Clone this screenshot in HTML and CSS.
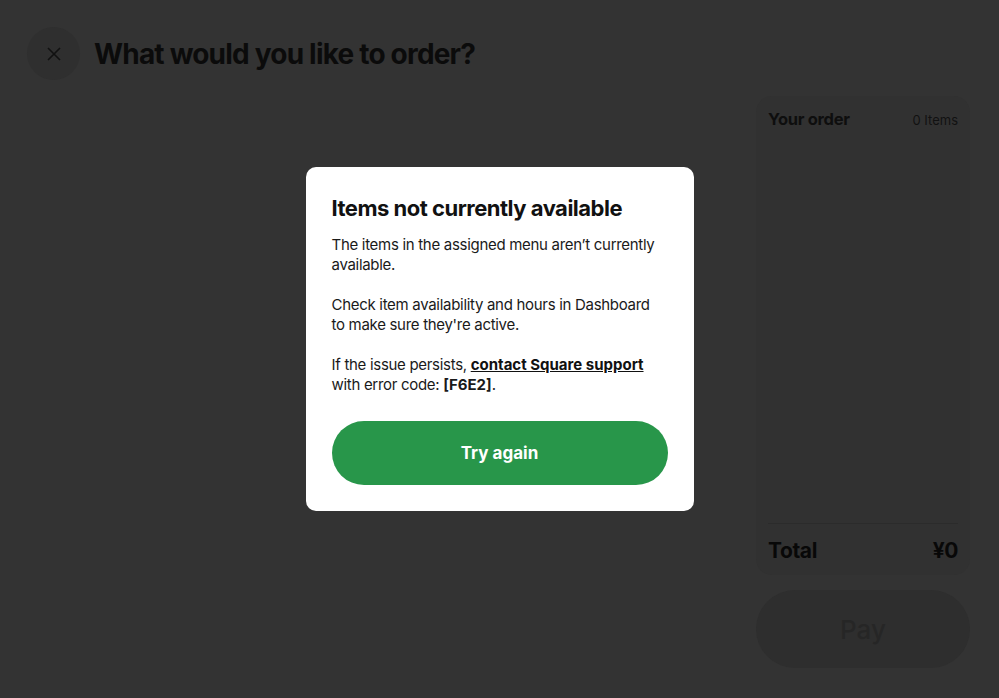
FILE: index.html
```html
<!DOCTYPE html>
<html lang="en">
<head>
<meta charset="utf-8">
<title>Order</title>
<link rel="stylesheet" href="styles.css">
</head>
<body>
<div class="page">
  <div class="main">
    <header class="header">
      <button class="close" aria-label="Close">
        <svg width="14" height="14" viewBox="0 0 14 14"><path d="M1 1L13 13M13 1L1 13" stroke="#111" stroke-width="1.6" fill="none"/></svg>
      </button>
      <h1 class="title">What would you like to order?</h1>
    </header>
  </div>
  <aside class="side">
    <div class="order">
      <div class="order-head">
        <span class="order-title">Your order</span>
        <span class="order-count">0 Items</span>
      </div>
      <div class="order-body"></div>
      <div class="order-total">
        <span>Total</span>
        <span>¥0</span>
      </div>
    </div>
    <button class="pay">Pay</button>
  </aside>
</div>
<div class="overlay">
  <div class="modal">
    <h2 class="modal-title">Items not currently available</h2>
    <p class="modal-text">The items in the assigned menu aren’t currently available.</p>
    <p class="modal-text">Check item availability and hours in Dashboard to make sure they're active.</p>
    <p class="modal-text">If the issue persists, <a class="link" href="#">contact Square support</a> with error code: <b>[F6E2]</b>.</p>
    <button class="retry">Try again</button>
  </div>
</div>
</body>
</html>
```
FILE: styles.css
```css
* { box-sizing: border-box; }
html, body { margin: 0; padding: 0; }
body {
  width: 999px;
  height: 698px;
  overflow: hidden;
  background: #333333;
  font-family: "Inter", "Noto Sans", sans-serif;
  position: relative;
}
.page {
  display: flex;
  height: 698px;
  padding: 27px 29px 0 27px;
}
.main { flex: 1; }
.header {
  display: flex;
  align-items: center;
  gap: 14px;
}
.close {
  width: 53px;
  height: 53px;
  border-radius: 50%;
  border: none;
  background: #2f2f2f;
  display: flex;
  align-items: center;
  justify-content: center;
  padding: 0;
}
.title {
  margin: 0;
  font-size: 28px;
  font-weight: 700;
  letter-spacing: -0.8px;
  color: #0b0b0b;
}
.side {
  width: 214px;
  display: flex;
  flex-direction: column;
  padding-top: 69px;
}
.order {
  height: 479px;
  background: #313131;
  border-radius: 16px;
  padding: 0 12px;
  display: flex;
  flex-direction: column;
}
.order-head {
  display: flex;
  justify-content: space-between;
  align-items: baseline;
  padding-top: 13px;
}
.order-title {
  font-size: 16.5px;
  font-weight: 700;
  letter-spacing: -0.3px;
  color: #0e0e0e;
}
.order-count {
  font-size: 13px;
  color: #111;
}
.order-body { flex: 1; }
.order-total {
  border-top: 1px solid #2b2b2b;
  height: 52px;
  padding-top: 2px;
  display: flex;
  justify-content: space-between;
  align-items: center;
  font-size: 21px;
  font-weight: 700;
  letter-spacing: -0.4px;
  color: #080808;
}
.pay {
  margin-top: 15px;
  height: 78px;
  border: none;
  border-radius: 39px;
  background: #2e2e2e;
  color: #262626;
  font-family: "Inter", sans-serif;
  font-size: 26px;
  font-weight: 500;
  padding-top: 2px;
}
.overlay {
  position: absolute;
  inset: 0;
  display: flex;
  align-items: flex-start;
  justify-content: center;
  padding-top: 167px;
}
.modal {
  width: 388px;
  background: #ffffff;
  border-radius: 10px;
  padding: 25px 26px 26px;
}
.modal-title {
  margin: 0 0 11px;
  font-size: 22px;
  font-weight: 700;
  letter-spacing: -0.5px;
  color: #111;
  line-height: 32px;
}
.modal-text {
  margin: 0 0 20px;
  padding-right: 10px;
  font-size: 15px;
  line-height: 20px;
  color: #1a1a1a;
  letter-spacing: -0.3px;
}
.modal-text b { font-weight: 700; letter-spacing: 0; }
.link {
  color: #111;
  font-weight: 700;
  letter-spacing: 0;
  text-decoration: underline;
}
.retry {
  display: block;
  width: 100%;
  height: 64px;
  margin-top: 26px;
  border: none;
  border-radius: 32px;
  background: #28964a;
  color: #fff;
  font-family: "Inter", sans-serif;
  font-size: 17px;
  font-weight: 700;
}
```
